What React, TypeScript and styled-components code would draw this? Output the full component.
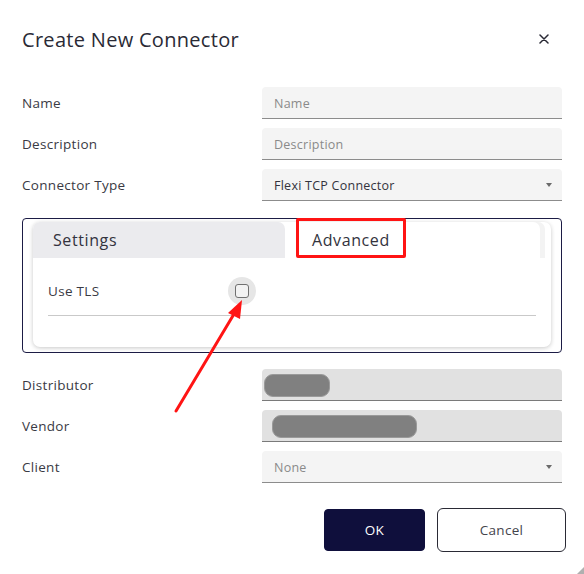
import React, { FC } from "react";
import styled, { createGlobalStyle } from "styled-components";

const GlobalStyle = createGlobalStyle`
  html, body { margin: 0; padding: 0; background: #ffffff; }
  body { font-family: "Open Sans", "Liberation Sans", sans-serif; color: #33333d; }
  * { box-sizing: border-box; }
`;

const Dialog = styled.div`
  position: relative;
  width: 584px;
  height: 574px;
  padding: 0 18px 0 22px;
  background: #ffffff;
  overflow: hidden;
`;

const Header = styled.div`
  display: flex;
  align-items: center;
  justify-content: space-between;
  height: 30px;
  margin-top: 24px;
  margin-bottom: 33px;
`;

const Title = styled.h1`
  margin: 0;
  font-size: 20px;
  font-weight: 400;
  color: #2a2a35;
  letter-spacing: 0.3px;
`;

const CloseButton = styled.button`
  display: flex;
  align-items: center;
  justify-content: center;
  width: 20px;
  height: 20px;
  margin-right: 12px;
  padding: 0;
  border: none;
  background: none;
  color: #2a2a35;
  cursor: pointer;
`;

const FieldGrid = styled.div`
  display: grid;
  grid-template-columns: 240px 300px;
  grid-auto-rows: 32px;
  row-gap: 9px;
`;

const Label = styled.label`
  display: flex;
  align-items: center;
  font-size: 13.5px;
  letter-spacing: 0.3px;
  color: #3a3a44;
`;

const Field = styled.div<{ $disabled?: boolean }>`
  position: relative;
  display: flex;
  align-items: center;
  padding: 1px 12px 0;
  border-radius: 4px 4px 0 0;
  background: ${p => (p.$disabled ? "#e1e1e1" : "#f4f4f4")};
  border-bottom: 1px solid ${p => (p.$disabled ? "#7a7a7a" : "#8c8c8c")};
  font-size: 12.5px;
  letter-spacing: 0.25px;
`;

const Placeholder = styled.span`
  color: #8a8a8a;
`;

const Value = styled.span`
  color: #33333d;
`;

const Caret = styled.span`
  position: absolute;
  right: 10px;
  top: 50%;
  margin-top: -2px;
  width: 0;
  height: 0;
  border-left: 3.5px solid transparent;
  border-right: 3.5px solid transparent;
  border-top: 4px solid #6a6a6a;
`;

const Redacted = styled.span<{ $width: number; $offset: number }>`
  display: block;
  height: 23px;
  margin-left: ${p => p.$offset}px;
  width: ${p => p.$width}px;
  border-radius: 9px;
  background: #808080;
  border: 1px solid #9a9a9a;
`;

const Panel = styled.div`
  margin: 17px 0 16px;
  width: 540px;
  height: 135px;
  padding: 3px 10px 0;
  border: 1px solid #1c1c45;
  border-radius: 4px;
`;

const Card = styled.div`
  height: 125px;
  border-radius: 7px;
  background: #ffffff;
  box-shadow: 0 1px 4px rgba(0, 0, 0, 0.22);
`;

const TabBar = styled.div`
  display: flex;
  height: 36px;
  gap: 8px;
`;

const Tab = styled.div<{ $active?: boolean }>`
  position: relative;
  display: flex;
  align-items: center;
  width: 252px;
  padding-left: ${p => (p.$active ? 19 : 20)}px;
  border-radius: 7px 7px 0 0;
  background: ${p => (p.$active ? "#ffffff" : "#ebebee")};
  font-size: 16px;
  letter-spacing: 0.6px;
  color: #33333d;
  ${p => p.$active && `box-shadow: inset -5px 0 0 #f3f3f3;`}
`;

const Highlight = styled.span`
  position: absolute;
  left: 3px;
  top: -4px;
  width: 110px;
  height: 40px;
  border: 3px solid #ff1414;
  border-radius: 2px;
`;

const TabBody = styled.div`
  padding: 0 15px;
`;

const OptionRow = styled.div`
  display: flex;
  align-items: center;
  padding: 19px 0 10px;
  border-bottom: 1px solid #c9c9c9;
`;

const OptionLabel = styled.span`
  width: 180px;
  font-size: 13.5px;
  letter-spacing: 0.3px;
  color: #3a3a44;
`;

const CheckHalo = styled.span`
  display: flex;
  align-items: center;
  justify-content: center;
  width: 28px;
  height: 28px;
  border-radius: 50%;
  background: #e6e6e6;
`;

const CheckBox = styled.span`
  width: 14px;
  height: 14px;
  border: 1.5px solid #707070;
  border-radius: 3px;
  background: #f2f2f2;
`;

const Footer = styled.div`
  display: flex;
  justify-content: flex-end;
  align-items: center;
  gap: 12px;
  margin-top: 25px;
`;

const Button = styled.button<{ $primary?: boolean }>`
  height: ${p => (p.$primary ? 42 : 44)}px;
  width: ${p => (p.$primary ? 101 : 129)}px;
  border-radius: ${p => (p.$primary ? 4 : 6)}px;
  border: 1px solid ${p => (p.$primary ? "#0f0f3c" : "#2a2a35")};
  background: ${p => (p.$primary ? "#0f0f3c" : "#ffffff")};
  color: ${p => (p.$primary ? "#ffffff" : "#44444c")};
  font-family: inherit;
  font-size: 13.5px;
  letter-spacing: 0.3px;
  cursor: pointer;
`;

const Annotation = styled.svg`
  position: absolute;
  left: 0;
  top: 0;
  pointer-events: none;
`;

const ResizeGrip = styled.span`
  position: absolute;
  right: 0;
  bottom: 0;
  width: 0;
  height: 0;
  border-left: 7px solid transparent;
  border-bottom: 7px solid #b0b0b0;
`;

type Row = {
  label: string;
  placeholder?: string;
  value?: string;
  select?: boolean;
  redacted?: { width: number; offset: number };
};

const topRows: Row[] = [
  { label: "Name", placeholder: "Name" },
  { label: "Description", placeholder: "Description" },
  { label: "Connector Type", value: "Flexi TCP Connector", select: true },
];

const bottomRows: Row[] = [
  { label: "Distributor", redacted: { width: 66, offset: -10 } },
  { label: "Vendor", redacted: { width: 145, offset: -2 } },
  { label: "Client", placeholder: "None", select: true },
];

const Fields: FC<{ rows: Row[] }> = ({ rows }) => (
  <FieldGrid>
    {rows.map(r => (
      <React.Fragment key={r.label}>
        <Label>{r.label}</Label>
        <Field $disabled={!!r.redacted}>
          {r.redacted && <Redacted $width={r.redacted.width} $offset={r.redacted.offset} />}
          {r.placeholder && <Placeholder>{r.placeholder}</Placeholder>}
          {r.value && <Value>{r.value}</Value>}
          {r.select && <Caret />}
        </Field>
      </React.Fragment>
    ))}
  </FieldGrid>
);

const App: FC = () => (
  <>
    <GlobalStyle />
    <Dialog>
      <Header>
        <Title>Create New Connector</Title>
        <CloseButton aria-label="Close">
          <svg width="10" height="10" viewBox="0 0 10 10">
            <path d="M1 1 L9 9 M9 1 L1 9" stroke="#2a2a35" strokeWidth="1.5" strokeLinecap="round" />
          </svg>
        </CloseButton>
      </Header>

      <Fields rows={topRows} />

      <Panel>
        <Card>
          <TabBar>
            <Tab>Settings</Tab>
            <Tab $active>
              <Highlight />
              Advanced
            </Tab>
          </TabBar>
          <TabBody>
            <OptionRow>
              <OptionLabel>Use TLS</OptionLabel>
              <CheckHalo>
                <CheckBox />
              </CheckHalo>
            </OptionRow>
          </TabBody>
        </Card>
      </Panel>

      <Fields rows={bottomRows} />

      <Footer>
        <Button $primary>OK</Button>
        <Button>Cancel</Button>
      </Footer>

      <Annotation width="584" height="574" viewBox="0 0 584 574">
        <line x1="176" y1="411" x2="234" y2="314" stroke="#ff1414" strokeWidth="3" strokeLinecap="round" />
        <polygon points="242,300 228,313 240,319" fill="#ff1414" />
      </Annotation>
      <ResizeGrip />
    </Dialog>
  </>
);

export default App;
